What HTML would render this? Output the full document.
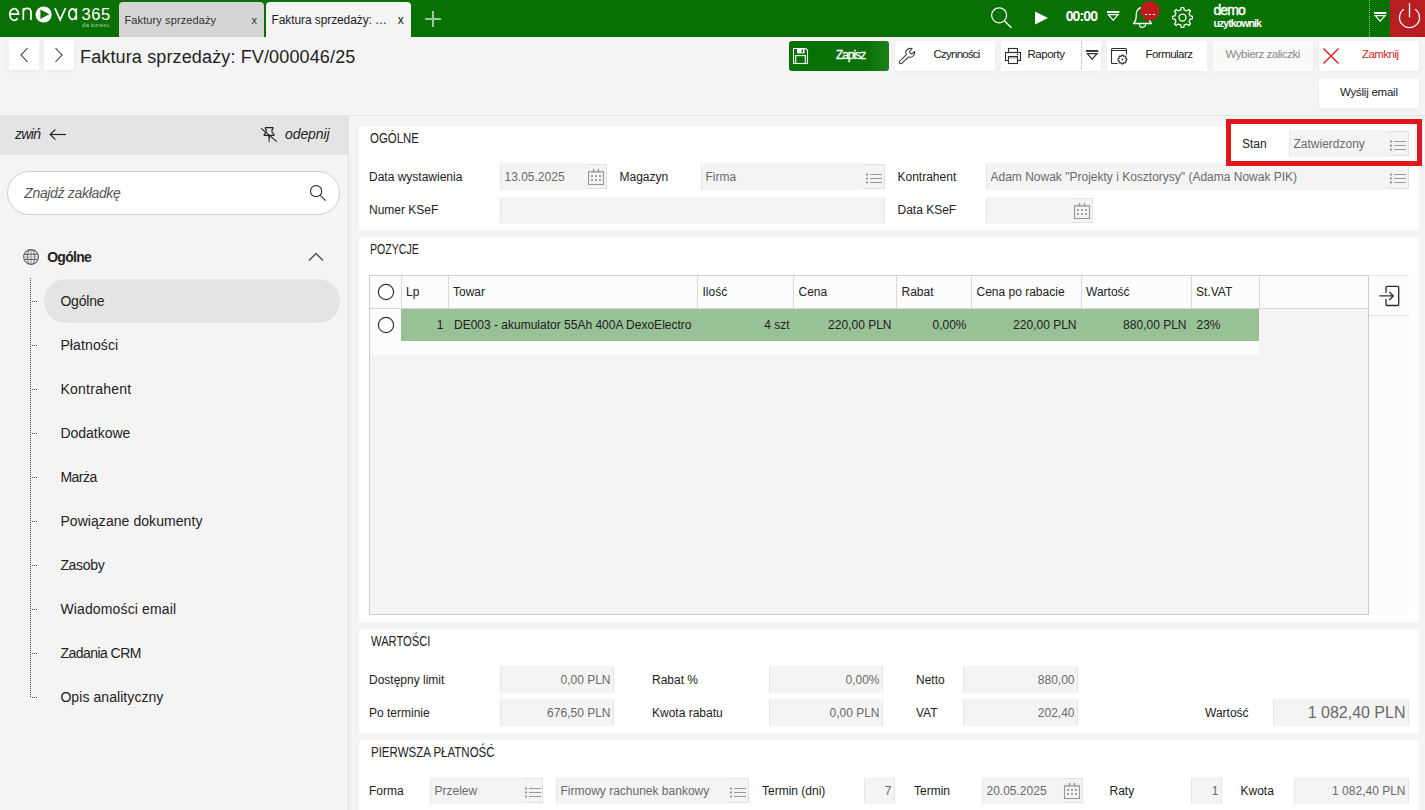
<!DOCTYPE html><html><head><meta charset="utf-8"><style>
html,body{margin:0;padding:0;}
body{width:1425px;height:810px;overflow:hidden;position:relative;background:#f4f4f4;font-family:"Liberation Sans",sans-serif;}
.t{position:absolute;white-space:nowrap;}
.r{position:absolute;}
</style></head><body>
<div class="r" style="left:0px;top:0px;width:1425px;height:37px;background:#097003;"></div>
<div class="r" style="left:1390px;top:0px;width:35px;height:37px;background:#b81d1f;"></div>
<div class="r" style="left:119px;top:2px;width:145px;height:35px;background:#d5d5d5;border-radius:4px 4px 0 0;"></div>
<div class="r" style="left:266px;top:2px;width:145px;height:35px;background:#f4f4f4;border-radius:4px 4px 0 0;"></div>
<div class="t" style="left:124.50px;top:14.59px;font-size:11px;line-height:11px;color:#333;letter-spacing:0.109px;">Faktury sprzedaży</div>
<div class="t" style="left:251.40px;top:14.59px;font-size:11px;line-height:11px;color:#333;">x</div>
<div class="t" style="left:271.50px;top:13.74px;font-size:12px;line-height:12px;color:#222;letter-spacing:-0.095px;">Faktura sprzedaży: …</div>
<div class="t" style="left:397.80px;top:13.74px;font-size:12px;line-height:12px;color:#222;">x</div>
<div class="r" style="left:425px;top:18px;width:16px;height:2px;background:#9cc89c;"></div>
<div class="r" style="left:432px;top:11px;width:2px;height:16px;background:#9cc89c;"></div>
<svg class="r" style="left:0px;top:0px;" width="115" height="32" viewBox="0 0 115 32"><g fill="none" stroke="#fff" stroke-width="1.7"><path d="M9.9 14.1 H18.6 A4.45 5.85 0 1 0 17.6 18.2"/><path d="M23.3 8.2 V20.1 M23.3 12.3 C23.3 9.6 25 8.3 27.1 8.3 C29.3 8.3 31 9.6 31 12.3 V20.1"/><path d="M54.9 8.2 L60.2 19.9 L65.5 8.2"/><path d="M76.3 8.2 V20.1 M76.3 14.2 A3.75 5.1 0 1 1 76.3 14.1"/></g><circle cx="43.65" cy="14.5" r="8.1" fill="#fff"/><path d="M40.4 9.4 L49.3 14.3 L40.4 19.1 Z" fill="#097003"/></svg>
<div class="t" style="left:81.60px;top:7.44px;font-size:16.6px;line-height:16.6px;color:#fff;letter-spacing:0.450px;">365</div>
<div class="t" style="left:82.00px;top:24.01px;font-size:4.6px;line-height:4.6px;color:#bcd8bc;letter-spacing:0.375px;">dla biznesu</div>
<svg class="r" style="left:988px;top:5px;" width="26" height="26" viewBox="0 0 26 26"><circle cx="11.1" cy="10.35" r="7.5" fill="none" stroke="#fff" stroke-width="1.2"/><path d="M16.6 16 L23.4 22.7" stroke="#fff" stroke-width="1.3"/></svg>
<svg class="r" style="left:1034px;top:11px;" width="15" height="14" viewBox="0 0 15 14"><path d="M1 0.6 L14 7 L1 13.4 Z" fill="#fff"/></svg>
<div class="t" style="left:1065.70px;top:9.35px;font-size:14px;line-height:14px;color:#fff;font-weight:bold;letter-spacing:-0.875px;">00:00</div>
<svg class="r" style="left:1106.8px;top:11.3px;" width="13" height="10" viewBox="0 0 13 10"><path d="M0 1 H12.4" stroke="#fff" stroke-width="1.9"/><path d="M1.3 3.6 L11.1 3.6 L6.2 9.2 Z" fill="none" stroke="#fff" stroke-width="1.2" stroke-linejoin="miter"/></svg>
<svg class="r" style="left:1132px;top:5px;" width="22" height="24" viewBox="0 0 22 24"><path d="M1.5 18.5 C3.5 16.5 4.2 15 4.2 12 V9.5 C4.2 5.5 6.8 2.5 10.5 2.5 C14.2 2.5 16.8 5.5 16.8 9.5 V12 C16.8 15 17.5 16.5 19.5 18.5 Z" fill="none" stroke="#fff" stroke-width="1.3" stroke-linejoin="round"/><path d="M7.4 19.2 A3.1 3.1 0 0 0 13.6 19.2" fill="none" stroke="#fff" stroke-width="1.2"/></svg>
<svg class="r" style="left:1140px;top:1px;" width="20" height="20" viewBox="0 0 20 20"><circle cx="10" cy="9.8" r="9.7" fill="#bb1c22"/><path d="M5.2 13.5 H7.2 M9 13.5 H11 M12.8 13.5 H14.8" stroke="#fff" stroke-width="1.1"/></svg>
<svg class="r" style="left:1172px;top:7px;" width="21" height="21" viewBox="0 0 21 21"><path d="M7.59 3.48 L8.88 2.87 L9.26 0.38 L11.74 0.38 L12.12 2.87 L13.41 3.48 L14.75 3.96 L16.78 2.46 L18.54 4.22 L17.04 6.25 L17.52 7.59 L18.13 8.88 L20.62 9.26 L20.62 11.74 L18.13 12.12 L17.52 13.41 L17.04 14.75 L18.54 16.78 L16.78 18.54 L14.75 17.04 L13.41 17.52 L12.12 18.13 L11.74 20.62 L9.26 20.62 L8.88 18.13 L7.59 17.52 L6.25 17.04 L4.22 18.54 L2.46 16.78 L3.96 14.75 L3.48 13.41 L2.87 12.12 L0.38 11.74 L0.38 9.26 L2.87 8.88 L3.48 7.59 L3.96 6.25 L2.46 4.22 L4.22 2.46 L6.25 3.96 Z" fill="none" stroke="#fff" stroke-width="1.25" stroke-linejoin="round"/><circle cx="10.5" cy="10.5" r="3.5" fill="none" stroke="#fff" stroke-width="1.25"/></svg>
<div class="t" style="left:1213.40px;top:3.35px;font-size:14px;line-height:14px;color:#fff;letter-spacing:-0.900px;-webkit-text-stroke:0.4px #fff;">demo</div>
<div class="t" style="left:1213.40px;top:17.91px;font-size:10.5px;line-height:10.5px;color:#fff;font-weight:bold;letter-spacing:-0.900px;">uzytkownik</div>
<div class="r" style="left:1369px;top:0px;width:1px;height:37px;background:repeating-linear-gradient(to bottom,rgba(255,255,255,0.6) 0 1px,transparent 1px 2px);"></div>
<svg class="r" style="left:1373.5px;top:11.5px;" width="13" height="10" viewBox="0 0 13 10"><path d="M0 1 H12.4" stroke="#fff" stroke-width="1.9"/><path d="M1.3 3.6 L11.1 3.6 L6.2 9.2 Z" fill="none" stroke="#fff" stroke-width="1.2" stroke-linejoin="miter"/></svg>
<svg class="r" style="left:1397px;top:2px;" width="25" height="28" viewBox="0 0 25 28"><path d="M6.9 7.3 A10 10 0 1 0 18.1 7.3" fill="none" stroke="#fff" stroke-width="1.3"/><path d="M12.5 1.2 V15.4" stroke="#fff" stroke-width="1.3"/></svg>
<div class="r" style="left:9px;top:40px;width:30px;height:30px;background:#fff;border-radius:2px;box-shadow:0 1px 4px rgba(0,0,0,0.05);"></div>
<div class="r" style="left:44px;top:40px;width:30px;height:30px;background:#fff;border-radius:2px;box-shadow:0 1px 4px rgba(0,0,0,0.05);"></div>
<svg class="r" style="left:19px;top:47px;" width="11" height="16" viewBox="0 0 11 16"><path d="M8.6 1 L2.1 8 L8.6 15" fill="none" stroke="#333" stroke-width="1.1"/></svg>
<svg class="r" style="left:54px;top:47px;" width="11" height="16" viewBox="0 0 11 16"><path d="M1.5 1 L8 8 L1.5 15" fill="none" stroke="#333" stroke-width="1.1"/></svg>
<div class="t" style="left:80.00px;top:48.46px;font-size:18px;line-height:18px;color:#222;letter-spacing:0.138px;">Faktura sprzedaży: FV/000046/25</div>
<div class="r" style="left:789px;top:41px;width:100px;height:30px;background:linear-gradient(to right,#097003 0,#097003 78%,#1f7f1f 100%);border-radius:3px;"></div>
<svg class="r" style="left:793px;top:48px;" width="16" height="17" viewBox="0 0 16 17"><path d="M0.5 0.5 H12.8 L14.5 2.2 V15.5 H0.5 Z" fill="none" stroke="#fff" stroke-width="1.1"/><rect x="4" y="0.5" width="7.6" height="4.9" fill="#fff"/><rect x="8.6" y="1.5" width="1.4" height="3" fill="#097003"/><rect x="2.7" y="7.6" width="9.6" height="7.9" fill="none" stroke="#fff" stroke-width="1.1"/></svg>
<div class="t" style="left:835.90px;top:49.04px;font-size:12px;line-height:12px;color:#fff;letter-spacing:-1.010px;-webkit-text-stroke:0.35px #fff;">Zapisz</div>
<div class="r" style="left:895px;top:41px;width:100px;height:30px;background:#fff;border-radius:2px;box-shadow:0 1px 4px rgba(0,0,0,0.05);"></div>
<svg class="r" style="left:898px;top:47px;" width="18" height="18" viewBox="0 0 18 18"><path d="M2.2 15.2 L9 8.4 C8 6 8.8 3.4 10.9 2.2 C12.3 1.4 14 1.3 15.3 1.9 L12.5 4.7 L13.2 6.8 L15.3 7.5 L18 4.8 C18.4 6.3 18 8 17 9.2 C15.7 10.8 13.4 11.4 11.5 10.8 L4.4 17.6 C3.7 18.3 2.4 18.2 1.8 17.5 C1.2 16.9 1.5 15.9 2.2 15.2 Z" fill="none" stroke="#333" stroke-width="1.1" stroke-linejoin="round" transform="scale(0.92)"/></svg>
<div class="t" style="left:933.60px;top:49.46px;font-size:11.5px;line-height:11.5px;color:#222;letter-spacing:-0.781px;">Czynności</div>
<div class="r" style="left:1001px;top:41px;width:100px;height:30px;background:#fff;border-radius:2px;box-shadow:0 1px 4px rgba(0,0,0,0.05);"></div>
<div class="r" style="left:1081px;top:41px;width:1px;height:30px;background:repeating-linear-gradient(to bottom,#aaa 0 1px,transparent 1px 2px);"></div>
<svg class="r" style="left:1000px;top:42px;" width="26" height="26" viewBox="0 0 26 26"><rect x="8.5" y="6.5" width="9" height="4" fill="none" stroke="#2a3033" stroke-width="1.1"/><rect x="5.5" y="10.5" width="15" height="8" fill="none" stroke="#2a3033" stroke-width="1.1"/><rect x="8.5" y="14.5" width="9" height="7" fill="#fff" stroke="#2a3033" stroke-width="1.1"/><path d="M9 15.8 H17" stroke="#999" stroke-width="1.2"/><ellipse cx="17.5" cy="12.4" rx="0.9" ry="0.6" fill="#2a3033"/></svg>
<div class="t" style="left:1027.40px;top:49.46px;font-size:11.5px;line-height:11.5px;color:#222;letter-spacing:-0.442px;">Raporty</div>
<svg class="r" style="left:1086px;top:50px;" width="13" height="10" viewBox="0 0 13 10"><path d="M0 1 H12.4" stroke="#333" stroke-width="1.9"/><path d="M1.3 3.6 L11.1 3.6 L6.2 9.2 Z" fill="none" stroke="#333" stroke-width="1.2" stroke-linejoin="miter"/></svg>
<div class="r" style="left:1107px;top:41px;width:100px;height:30px;background:#fff;border-radius:2px;box-shadow:0 1px 4px rgba(0,0,0,0.05);"></div>
<svg class="r" style="left:1106px;top:42px;" width="30" height="28" viewBox="0 0 30 28"><path d="M11.6 21.5 H6.5 Q5.5 21.5 5.5 20.5 V7.5 Q5.5 6.5 6.5 6.5 H19.5 Q20.5 6.5 20.5 7.5 V12.4 M5.5 8.5 H20.5" fill="none" stroke="#2a3033" stroke-width="1.1"/><path d="M15.14 14.45 L15.64 13.17 L17.16 13.17 L17.66 14.45 L18.92 13.90 L20.00 14.98 L19.45 16.24 L20.73 16.74 L20.73 18.26 L19.45 18.76 L20.00 20.02 L18.92 21.10 L17.66 20.55 L17.16 21.83 L15.64 21.83 L15.14 20.55 L13.88 21.10 L12.80 20.02 L13.35 18.76 L12.07 18.26 L12.07 16.74 L13.35 16.24 L12.80 14.98 L13.88 13.90 Z" fill="none" stroke="#2a3033" stroke-width="1.1" stroke-linejoin="round"/><circle cx="16.4" cy="17.5" r="0.9" fill="#2a3033"/></svg>
<div class="t" style="left:1145.50px;top:49.46px;font-size:11.5px;line-height:11.5px;color:#222;letter-spacing:-0.531px;">Formularz</div>
<div class="r" style="left:1213px;top:41px;width:100px;height:30px;background:#fafafa;border-radius:2px;box-shadow:0 1px 4px rgba(0,0,0,0.05);"></div>
<div class="t" style="left:1225.50px;top:49.46px;font-size:11.5px;line-height:11.5px;color:#888;letter-spacing:-0.453px;">Wybierz zaliczki</div>
<div class="r" style="left:1319px;top:41px;width:100px;height:30px;background:#fff;border-radius:2px;box-shadow:0 1px 4px rgba(0,0,0,0.05);"></div>
<svg class="r" style="left:1322px;top:47px;" width="18" height="18" viewBox="0 0 18 18"><path d="M1.5 1.5 L16.5 16.5 M16.5 1.5 L1.5 16.5" stroke="#e0282c" stroke-width="1.5"/></svg>
<div class="t" style="left:1362.00px;top:49.46px;font-size:11.5px;line-height:11.5px;color:#d6232a;letter-spacing:-0.542px;">Zamknij</div>
<div class="r" style="left:1319px;top:78px;width:100px;height:30px;background:#fff;border-radius:2px;box-shadow:0 1px 4px rgba(0,0,0,0.05);"></div>
<div class="t" style="left:1340.00px;top:87.26px;font-size:11.5px;line-height:11.5px;color:#222;letter-spacing:-0.236px;">Wyślij email</div>
<div class="r" style="left:0px;top:115px;width:1425px;height:1px;background:#e6e6e6;"></div>
<div class="r" style="left:0px;top:116px;width:348px;height:39px;background:#e4e4e4;"></div>
<div class="r" style="left:348px;top:116px;width:1px;height:694px;background:#e2e2e2;"></div>
<div class="t" style="left:14.90px;top:127.15px;font-size:14px;line-height:14px;color:#222;font-style:italic;letter-spacing:-0.633px;">zwiń</div>
<svg class="r" style="left:48px;top:127px;" width="20" height="14" viewBox="0 0 20 14"><path d="M2.3 7.5 H18" stroke="#222" stroke-width="1.15"/><path d="M7.4 2.3 L2.2 7.5 L7.4 12.7" fill="none" stroke="#222" stroke-width="1.15"/></svg>
<svg class="r" style="left:258px;top:124px;" width="22" height="22" viewBox="0 0 22 22"><path d="M7.4 3.6 H15 V4.6 L14 5.8 V8.2 L16 10.3 V11.3 H6.2 V10.3 L8.2 8.2 V5.8 L7.4 4.6 Z" fill="none" stroke="#222" stroke-width="1.2" stroke-linejoin="round"/><path d="M10.2 11.5 H12 L11.4 18.4 H10.8 Z" fill="#222"/><path d="M3.2 4.3 L18.8 17.6" stroke="#222" stroke-width="1.1"/></svg>
<div class="t" style="left:285.00px;top:127.15px;font-size:14px;line-height:14px;color:#222;font-style:italic;letter-spacing:-0.083px;">odepnij</div>
<div class="r" style="left:7px;top:171px;width:333px;height:44px;background:#fff;border:1px solid #cfcfcf;border-radius:22px;box-sizing:border-box;"></div>
<div class="t" style="left:24.20px;top:186.15px;font-size:14px;line-height:14px;color:#555;font-style:italic;letter-spacing:-0.325px;">Znajdź zakładkę</div>
<svg class="r" style="left:308px;top:183px;" width="20" height="20" viewBox="0 0 20 20"><circle cx="8.1" cy="8.15" r="5.6" fill="none" stroke="#333" stroke-width="1.15"/><path d="M12.2 12.3 L17.6 17.6" stroke="#333" stroke-width="1.15"/></svg>
<svg class="r" style="left:22px;top:248px;" width="18" height="18" viewBox="0 0 18 18"><circle cx="9.05" cy="9" r="7.4" fill="none" stroke="#555" stroke-width="1.05"/><ellipse cx="9.05" cy="9" rx="3.7" ry="7.4" fill="none" stroke="#666" stroke-width="0.95"/><path d="M9.05 1.6 V16.4" stroke="#888" stroke-width="0.9"/><path d="M1.6 9 H16.4" stroke="#999" stroke-width="0.8"/><path d="M2.6 6.3 H15.5 M2.6 11.4 H15.5" stroke="#555" stroke-width="1"/></svg>
<div class="t" style="left:47.20px;top:249.65px;font-size:14px;line-height:14px;color:#222;font-weight:bold;letter-spacing:-0.720px;">Ogólne</div>
<svg class="r" style="left:307px;top:251px;" width="18" height="12" viewBox="0 0 18 12"><path d="M2 9.5 L9 2.5 L16 9.5" fill="none" stroke="#555" stroke-width="1.4"/></svg>
<div class="r" style="left:44px;top:279px;width:296px;height:44px;background:#e4e4e4;border-radius:22px;"></div>
<div class="r" style="left:30px;top:278px;width:1px;height:420px;background:repeating-linear-gradient(to bottom,#444 0 1px,transparent 1px 2px);"></div>
<div class="r" style="left:31px;top:301px;width:6px;height:1px;background:repeating-linear-gradient(to right,transparent 0 1px,#444 1px 2px);"></div>
<div class="t" style="left:60.40px;top:293.75px;font-size:14px;line-height:14px;color:#222;letter-spacing:-0.190px;">Ogólne</div>
<div class="r" style="left:31px;top:345px;width:6px;height:1px;background:repeating-linear-gradient(to right,transparent 0 1px,#444 1px 2px);"></div>
<div class="t" style="left:60.40px;top:337.75px;font-size:14px;line-height:14px;color:#222;letter-spacing:0.125px;">Płatności</div>
<div class="r" style="left:31px;top:389px;width:6px;height:1px;background:repeating-linear-gradient(to right,transparent 0 1px,#444 1px 2px);"></div>
<div class="t" style="left:60.40px;top:381.75px;font-size:14px;line-height:14px;color:#222;letter-spacing:0.256px;">Kontrahent</div>
<div class="r" style="left:31px;top:433px;width:6px;height:1px;background:repeating-linear-gradient(to right,transparent 0 1px,#444 1px 2px);"></div>
<div class="t" style="left:60.40px;top:425.75px;font-size:14px;line-height:14px;color:#222;letter-spacing:-0.006px;">Dodatkowe</div>
<div class="r" style="left:31px;top:477px;width:6px;height:1px;background:repeating-linear-gradient(to right,transparent 0 1px,#444 1px 2px);"></div>
<div class="t" style="left:60.40px;top:469.75px;font-size:14px;line-height:14px;color:#222;letter-spacing:-0.500px;">Marża</div>
<div class="r" style="left:31px;top:521px;width:6px;height:1px;background:repeating-linear-gradient(to right,transparent 0 1px,#444 1px 2px);"></div>
<div class="t" style="left:60.40px;top:513.75px;font-size:14px;line-height:14px;color:#222;letter-spacing:0.064px;">Powiązane dokumenty</div>
<div class="r" style="left:31px;top:565px;width:6px;height:1px;background:repeating-linear-gradient(to right,transparent 0 1px,#444 1px 2px);"></div>
<div class="t" style="left:60.40px;top:557.75px;font-size:14px;line-height:14px;color:#222;letter-spacing:-0.320px;">Zasoby</div>
<div class="r" style="left:31px;top:609px;width:6px;height:1px;background:repeating-linear-gradient(to right,transparent 0 1px,#444 1px 2px);"></div>
<div class="t" style="left:60.40px;top:601.75px;font-size:14px;line-height:14px;color:#222;letter-spacing:0.140px;">Wiadomości email</div>
<div class="r" style="left:31px;top:653px;width:6px;height:1px;background:repeating-linear-gradient(to right,transparent 0 1px,#444 1px 2px);"></div>
<div class="t" style="left:60.40px;top:645.75px;font-size:14px;line-height:14px;color:#222;letter-spacing:-0.535px;">Zadania CRM</div>
<div class="r" style="left:31px;top:697px;width:6px;height:1px;background:repeating-linear-gradient(to right,transparent 0 1px,#444 1px 2px);"></div>
<div class="t" style="left:60.40px;top:689.75px;font-size:14px;line-height:14px;color:#222;letter-spacing:0.070px;">Opis analityczny</div>
<div class="r" style="left:359px;top:126px;width:1060px;height:104px;background:#fff;border-radius:3px;"></div>
<div class="t" style="left:370.40px;top:131.15px;font-size:14px;line-height:14px;color:#222;transform:scaleX(0.8164);transform-origin:0.00px 0;">OGÓLNE</div>
<div class="t" style="left:369.00px;top:170.64px;font-size:12px;line-height:12px;color:#222;">Data wystawienia</div>
<div class="r" style="left:500px;top:163px;width:86px;height:27px;background:#f4f4f4;border-left:1px solid #e6e6e6;border-radius:2px;box-sizing:border-box;"></div>
<div class="t" style="left:504.50px;top:170.64px;font-size:12px;line-height:12px;color:#6a6a6a;">13.05.2025</div>
<div class="r" style="left:586px;top:164px;width:21px;height:25px;background:#f4f4f4;border:1px solid #e2e2e2;border-left:none;box-sizing:border-box;"></div>
<svg class="r" style="left:586px;top:163px;" width="22" height="27" viewBox="0 0 22 27"><rect x="2.5" y="8.5" width="15" height="13" fill="none" stroke="#999" stroke-width="1.1"/><path d="M2.5 8.8 H17.5" stroke="#aaa" stroke-width="1.6"/><path d="M7.5 5.8 V9.8 M12.5 5.8 V9.8" stroke="#999" stroke-width="1.3"/><g fill="#a0a0a0"><rect x="5" y="12" width="2" height="2"/><rect x="9" y="12" width="2" height="2"/><rect x="13" y="12" width="2" height="2"/><rect x="5" y="16" width="2" height="2"/><rect x="9" y="16" width="2" height="2"/><rect x="13" y="16" width="2" height="2"/></g></svg>
<div class="t" style="left:619.50px;top:170.64px;font-size:12px;line-height:12px;color:#222;">Magazyn</div>
<div class="r" style="left:701px;top:163px;width:163px;height:27px;background:#f4f4f4;border-left:1px solid #e6e6e6;border-radius:2px;box-sizing:border-box;"></div>
<div class="t" style="left:705.50px;top:170.64px;font-size:12px;line-height:12px;color:#6a6a6a;">Firma</div>
<div class="r" style="left:864px;top:164px;width:21px;height:25px;background:#f4f4f4;border:1px solid #e2e2e2;border-left:none;box-sizing:border-box;"></div>
<svg class="r" style="left:864px;top:163px;" width="21" height="27" viewBox="0 0 21 27"><g fill="#999"><rect x="2" y="10.5" width="2" height="2"/><rect x="2" y="14.5" width="2" height="2"/><rect x="2" y="18.5" width="2" height="2"/></g><path d="M6 11.5 H18 M6 15.5 H18 M6 19.5 H18" stroke="#999" stroke-width="1.1"/></svg>
<div class="t" style="left:897.50px;top:170.64px;font-size:12px;line-height:12px;color:#222;">Kontrahent</div>
<div class="r" style="left:986px;top:163px;width:402px;height:27px;background:#f4f4f4;border-left:1px solid #e6e6e6;border-radius:2px;box-sizing:border-box;"></div>
<div class="t" style="left:990.50px;top:170.64px;font-size:12px;line-height:12px;color:#6a6a6a;">Adam Nowak "Projekty i Kosztorysy" (Adama Nowak PIK)</div>
<div class="r" style="left:1388px;top:164px;width:21px;height:25px;background:#f4f4f4;border:1px solid #e2e2e2;border-left:none;box-sizing:border-box;"></div>
<svg class="r" style="left:1388px;top:163px;" width="21" height="27" viewBox="0 0 21 27"><g fill="#999"><rect x="2" y="10.5" width="2" height="2"/><rect x="2" y="14.5" width="2" height="2"/><rect x="2" y="18.5" width="2" height="2"/></g><path d="M6 11.5 H18 M6 15.5 H18 M6 19.5 H18" stroke="#999" stroke-width="1.1"/></svg>
<div class="t" style="left:369.00px;top:203.64px;font-size:12px;line-height:12px;color:#222;">Numer KSeF</div>
<div class="r" style="left:500px;top:197px;width:385px;height:27px;background:#f4f4f4;border-left:1px solid #e6e6e6;border-right:1px solid #e6e6e6;border-radius:2px;box-sizing:border-box;"></div>
<div class="t" style="left:897.50px;top:203.64px;font-size:12px;line-height:12px;color:#222;">Data KSeF</div>
<div class="r" style="left:986px;top:197px;width:86px;height:27px;background:#f4f4f4;border-left:1px solid #e6e6e6;border-radius:2px;box-sizing:border-box;"></div>
<div class="r" style="left:1072px;top:198px;width:21px;height:25px;background:#f4f4f4;border:1px solid #e2e2e2;border-left:none;box-sizing:border-box;"></div>
<svg class="r" style="left:1072px;top:197px;" width="22" height="27" viewBox="0 0 22 27"><rect x="2.5" y="8.5" width="15" height="13" fill="none" stroke="#999" stroke-width="1.1"/><path d="M2.5 8.8 H17.5" stroke="#aaa" stroke-width="1.6"/><path d="M7.5 5.8 V9.8 M12.5 5.8 V9.8" stroke="#999" stroke-width="1.3"/><g fill="#a0a0a0"><rect x="5" y="12" width="2" height="2"/><rect x="9" y="12" width="2" height="2"/><rect x="13" y="12" width="2" height="2"/><rect x="5" y="16" width="2" height="2"/><rect x="9" y="16" width="2" height="2"/><rect x="13" y="16" width="2" height="2"/></g></svg>
<div class="t" style="left:1242.00px;top:137.84px;font-size:12px;line-height:12px;color:#222;">Stan</div>
<div class="r" style="left:1289px;top:130px;width:99px;height:27px;background:#f4f4f4;border-left:1px solid #e6e6e6;border-radius:2px;box-sizing:border-box;"></div>
<div class="t" style="left:1293.50px;top:137.84px;font-size:12px;line-height:12px;color:#6a6a6a;">Zatwierdzony</div>
<div class="r" style="left:1388px;top:131px;width:21px;height:25px;background:#f4f4f4;border:1px solid #e2e2e2;border-left:none;box-sizing:border-box;"></div>
<svg class="r" style="left:1388px;top:130px;" width="21" height="27" viewBox="0 0 21 27"><g fill="#999"><rect x="2" y="10.5" width="2" height="2"/><rect x="2" y="14.5" width="2" height="2"/><rect x="2" y="18.5" width="2" height="2"/></g><path d="M6 11.5 H18 M6 15.5 H18 M6 19.5 H18" stroke="#999" stroke-width="1.1"/></svg>
<div class="r" style="left:1226px;top:119px;width:196px;height:47px;border:5px solid #e3161b;box-sizing:border-box;"></div>
<div class="r" style="left:359px;top:237px;width:1060px;height:385px;background:#fff;border-radius:3px;"></div>
<div class="t" style="left:370.20px;top:242.15px;font-size:14px;line-height:14px;color:#222;transform:scaleX(0.7545);transform-origin:0.00px 0;">POZYCJE</div>
<div class="r" style="left:369px;top:275px;width:1000px;height:340px;background:#f4f4f4;border:1px solid #cdcdcd;box-sizing:border-box;"></div>
<div class="r" style="left:370px;top:276px;width:998px;height:32px;background:#fcfcfc;"></div>
<div class="r" style="left:370px;top:308px;width:998px;height:1px;background:#d6d6d6;"></div>
<div class="r" style="left:370px;top:309px;width:889px;height:46px;background:#fcfcfc;"></div>
<div class="r" style="left:401px;top:309px;width:858px;height:32px;background:#98c195;"></div>
<div class="r" style="left:401px;top:276px;width:1px;height:32px;background:#dadada;"></div>
<div class="r" style="left:448px;top:276px;width:1px;height:32px;background:#dadada;"></div>
<div class="r" style="left:697px;top:276px;width:1px;height:32px;background:#dadada;"></div>
<div class="r" style="left:793px;top:276px;width:1px;height:32px;background:#dadada;"></div>
<div class="r" style="left:896px;top:276px;width:1px;height:32px;background:#dadada;"></div>
<div class="r" style="left:971px;top:276px;width:1px;height:32px;background:#dadada;"></div>
<div class="r" style="left:1081px;top:276px;width:1px;height:32px;background:#dadada;"></div>
<div class="r" style="left:1191px;top:276px;width:1px;height:32px;background:#dadada;"></div>
<div class="r" style="left:1259px;top:276px;width:1px;height:32px;background:#dadada;"></div>
<svg class="r" style="left:377px;top:283px;" width="18" height="18" viewBox="0 0 18 18"><circle cx="9" cy="9" r="7.6" fill="#fff" stroke="#333" stroke-width="1.2"/></svg>
<svg class="r" style="left:377px;top:316px;" width="18" height="18" viewBox="0 0 18 18"><circle cx="9" cy="9" r="7.6" fill="#fff" stroke="#333" stroke-width="1.2"/></svg>
<div class="t" style="left:406.00px;top:285.64px;font-size:12px;line-height:12px;color:#222;">Lp</div>
<div class="t" style="left:453.00px;top:285.64px;font-size:12px;line-height:12px;color:#222;">Towar</div>
<div class="t" style="left:702.50px;top:285.64px;font-size:12px;line-height:12px;color:#222;">Ilość</div>
<div class="t" style="left:798.50px;top:285.64px;font-size:12px;line-height:12px;color:#222;">Cena</div>
<div class="t" style="left:901.50px;top:285.64px;font-size:12px;line-height:12px;color:#222;">Rabat</div>
<div class="t" style="left:976.50px;top:285.64px;font-size:12px;line-height:12px;color:#222;">Cena po rabacie</div>
<div class="t" style="left:1086.00px;top:285.64px;font-size:12px;line-height:12px;color:#222;">Wartość</div>
<div class="t" style="left:1196.00px;top:285.64px;font-size:12px;line-height:12px;color:#222;">St.VAT</div>
<div class="t" style="right:981.5px;top:318.64px;font-size:12px;line-height:12px;color:#222;">1</div>
<div class="t" style="left:454.00px;top:318.64px;font-size:12px;line-height:12px;color:#222;">DE003 - akumulator 55Ah 400A DexoElectro</div>
<div class="t" style="right:635.5px;top:318.64px;font-size:12px;line-height:12px;color:#222;">4 szt</div>
<div class="t" style="right:533.5px;top:318.64px;font-size:12px;line-height:12px;color:#222;">220,00 PLN</div>
<div class="t" style="right:458.5px;top:318.64px;font-size:12px;line-height:12px;color:#222;">0,00%</div>
<div class="t" style="right:348.5px;top:318.64px;font-size:12px;line-height:12px;color:#222;">220,00 PLN</div>
<div class="t" style="right:238.5px;top:318.64px;font-size:12px;line-height:12px;color:#222;">880,00 PLN</div>
<div class="t" style="left:1196.50px;top:318.64px;font-size:12px;line-height:12px;color:#222;">23%</div>
<div class="r" style="left:1369px;top:275px;width:40px;height:340px;background:#fcfcfc;"></div>
<div class="r" style="left:1369px;top:275px;width:40px;height:1px;background:#e8e8e8;"></div>
<div class="r" style="left:1369px;top:315px;width:40px;height:1px;background:#e2e2e2;"></div>
<div class="r" style="left:1370px;top:316px;width:39px;height:299px;background:#fcfcfc;"></div>
<svg class="r" style="left:1378px;top:285px;" width="22" height="22" viewBox="0 0 22 22"><path d="M8 7.7 V2.2 Q8 1.3 8.9 1.3 H19.8 Q20.7 1.3 20.7 2.2 V19.6 Q20.7 20.5 19.8 20.5 H8.9 Q8 20.5 8 19.6 V14.1" fill="none" stroke="#2a2a2a" stroke-width="1.3"/><path d="M1.3 10.9 H15.2 M11.3 6.9 L15.3 10.9 L11.3 14.9" fill="none" stroke="#333" stroke-width="1.35"/></svg>
<div class="r" style="left:359px;top:629px;width:1060px;height:104px;background:#fff;border-radius:3px;"></div>
<div class="t" style="left:370.60px;top:634.15px;font-size:14px;line-height:14px;color:#222;transform:scaleX(0.7984);transform-origin:0.00px 0;">WARTOŚCI</div>
<div class="t" style="left:369.00px;top:673.84px;font-size:12px;line-height:12px;color:#222;">Dostępny limit</div>
<div class="r" style="left:500px;top:666px;width:114px;height:27px;background:#f4f4f4;border-left:1px solid #e6e6e6;border-right:1px solid #e6e6e6;border-radius:2px;box-sizing:border-box;"></div>
<div class="t" style="right:814.5px;top:673.64px;font-size:12px;line-height:12px;color:#6a6a6a;">0,00 PLN</div>
<div class="t" style="left:369.00px;top:706.84px;font-size:12px;line-height:12px;color:#222;">Po terminie</div>
<div class="r" style="left:500px;top:699px;width:114px;height:27px;background:#f4f4f4;border-left:1px solid #e6e6e6;border-right:1px solid #e6e6e6;border-radius:2px;box-sizing:border-box;"></div>
<div class="t" style="right:814.5px;top:706.64px;font-size:12px;line-height:12px;color:#6a6a6a;">676,50 PLN</div>
<div class="t" style="left:652.00px;top:673.84px;font-size:12px;line-height:12px;color:#222;">Rabat %</div>
<div class="r" style="left:769px;top:666px;width:114px;height:27px;background:#f4f4f4;border-left:1px solid #e6e6e6;border-right:1px solid #e6e6e6;border-radius:2px;box-sizing:border-box;"></div>
<div class="t" style="right:545.5px;top:673.64px;font-size:12px;line-height:12px;color:#6a6a6a;">0,00%</div>
<div class="t" style="left:652.00px;top:706.84px;font-size:12px;line-height:12px;color:#222;">Kwota rabatu</div>
<div class="r" style="left:769px;top:699px;width:114px;height:27px;background:#f4f4f4;border-left:1px solid #e6e6e6;border-right:1px solid #e6e6e6;border-radius:2px;box-sizing:border-box;"></div>
<div class="t" style="right:545.5px;top:706.64px;font-size:12px;line-height:12px;color:#6a6a6a;">0,00 PLN</div>
<div class="t" style="left:916.00px;top:673.84px;font-size:12px;line-height:12px;color:#222;">Netto</div>
<div class="r" style="left:963px;top:666px;width:115px;height:27px;background:#f4f4f4;border-left:1px solid #e6e6e6;border-right:1px solid #e6e6e6;border-radius:2px;box-sizing:border-box;"></div>
<div class="t" style="right:350.5px;top:673.64px;font-size:12px;line-height:12px;color:#6a6a6a;">880,00</div>
<div class="t" style="left:916.00px;top:706.84px;font-size:12px;line-height:12px;color:#222;">VAT</div>
<div class="r" style="left:963px;top:699px;width:115px;height:27px;background:#f4f4f4;border-left:1px solid #e6e6e6;border-right:1px solid #e6e6e6;border-radius:2px;box-sizing:border-box;"></div>
<div class="t" style="right:350.5px;top:706.64px;font-size:12px;line-height:12px;color:#6a6a6a;">202,40</div>
<div class="t" style="left:1205.00px;top:706.64px;font-size:12px;line-height:12px;color:#222;">Wartość</div>
<div class="r" style="left:1273px;top:699px;width:136px;height:27px;background:#f4f4f4;border-left:1px solid #e6e6e6;border-right:1px solid #e6e6e6;border-radius:2px;box-sizing:border-box;"></div>
<div class="t" style="right:19.5px;top:705.45px;font-size:16px;line-height:16px;color:#6a6a6a;">1 082,40 PLN</div>
<div class="r" style="left:359px;top:740px;width:1060px;height:72px;background:#fff;border-radius:3px;"></div>
<div class="t" style="left:370.60px;top:745.35px;font-size:14px;line-height:14px;color:#222;transform:scaleX(0.8218);transform-origin:0.00px 0;">PIERWSZA PŁATNOŚĆ</div>
<div class="t" style="left:369.00px;top:785.04px;font-size:12px;line-height:12px;color:#222;">Forma</div>
<div class="r" style="left:430px;top:777px;width:93px;height:27px;background:#f4f4f4;border-left:1px solid #e6e6e6;border-radius:2px;box-sizing:border-box;"></div>
<div class="t" style="left:434.50px;top:785.04px;font-size:12px;line-height:12px;color:#6a6a6a;">Przelew</div>
<div class="r" style="left:523px;top:778px;width:20px;height:25px;background:#f4f4f4;border:1px solid #e2e2e2;border-left:none;box-sizing:border-box;"></div>
<svg class="r" style="left:523px;top:777px;" width="21" height="27" viewBox="0 0 21 27"><g fill="#999"><rect x="2" y="10.5" width="2" height="2"/><rect x="2" y="14.5" width="2" height="2"/><rect x="2" y="18.5" width="2" height="2"/></g><path d="M6 11.5 H18 M6 15.5 H18 M6 19.5 H18" stroke="#999" stroke-width="1.1"/></svg>
<div class="r" style="left:556px;top:777px;width:172px;height:27px;background:#f4f4f4;border-left:1px solid #e6e6e6;border-radius:2px;box-sizing:border-box;"></div>
<div class="t" style="left:560.50px;top:785.04px;font-size:12px;line-height:12px;color:#6a6a6a;">Firmowy rachunek bankowy</div>
<div class="r" style="left:728px;top:778px;width:21px;height:25px;background:#f4f4f4;border:1px solid #e2e2e2;border-left:none;box-sizing:border-box;"></div>
<svg class="r" style="left:728px;top:777px;" width="21" height="27" viewBox="0 0 21 27"><g fill="#999"><rect x="2" y="10.5" width="2" height="2"/><rect x="2" y="14.5" width="2" height="2"/><rect x="2" y="18.5" width="2" height="2"/></g><path d="M6 11.5 H18 M6 15.5 H18 M6 19.5 H18" stroke="#999" stroke-width="1.1"/></svg>
<div class="t" style="left:762.00px;top:785.04px;font-size:12px;line-height:12px;color:#222;">Termin (dni)</div>
<div class="r" style="left:864px;top:777px;width:31px;height:27px;background:#f4f4f4;border-left:1px solid #e6e6e6;border-right:1px solid #e6e6e6;border-radius:2px;box-sizing:border-box;"></div>
<div class="t" style="right:533.5px;top:785.04px;font-size:12px;line-height:12px;color:#6a6a6a;">7</div>
<div class="t" style="left:914.00px;top:785.04px;font-size:12px;line-height:12px;color:#222;">Termin</div>
<div class="r" style="left:982px;top:777px;width:80px;height:27px;background:#f4f4f4;border-left:1px solid #e6e6e6;border-radius:2px;box-sizing:border-box;"></div>
<div class="t" style="left:986.50px;top:785.04px;font-size:12px;line-height:12px;color:#6a6a6a;">20.05.2025</div>
<div class="r" style="left:1062px;top:778px;width:21px;height:25px;background:#f4f4f4;border:1px solid #e2e2e2;border-left:none;box-sizing:border-box;"></div>
<svg class="r" style="left:1062px;top:777px;" width="22" height="27" viewBox="0 0 22 27"><rect x="2.5" y="8.5" width="15" height="13" fill="none" stroke="#999" stroke-width="1.1"/><path d="M2.5 8.8 H17.5" stroke="#aaa" stroke-width="1.6"/><path d="M7.5 5.8 V9.8 M12.5 5.8 V9.8" stroke="#999" stroke-width="1.3"/><g fill="#a0a0a0"><rect x="5" y="12" width="2" height="2"/><rect x="9" y="12" width="2" height="2"/><rect x="13" y="12" width="2" height="2"/><rect x="5" y="16" width="2" height="2"/><rect x="9" y="16" width="2" height="2"/><rect x="13" y="16" width="2" height="2"/></g></svg>
<div class="t" style="left:1109.50px;top:785.04px;font-size:12px;line-height:12px;color:#222;">Raty</div>
<div class="r" style="left:1191px;top:777px;width:31px;height:27px;background:#f4f4f4;border-left:1px solid #e6e6e6;border-right:1px solid #e6e6e6;border-radius:2px;box-sizing:border-box;"></div>
<div class="t" style="right:206.5px;top:785.04px;font-size:12px;line-height:12px;color:#6a6a6a;">1</div>
<div class="t" style="left:1240.50px;top:785.04px;font-size:12px;line-height:12px;color:#222;">Kwota</div>
<div class="r" style="left:1294px;top:777px;width:115px;height:27px;background:#f4f4f4;border-left:1px solid #e6e6e6;border-right:1px solid #e6e6e6;border-radius:2px;box-sizing:border-box;"></div>
<div class="t" style="right:19.5px;top:785.04px;font-size:12px;line-height:12px;color:#6a6a6a;">1 082,40 PLN</div>
</body></html>
